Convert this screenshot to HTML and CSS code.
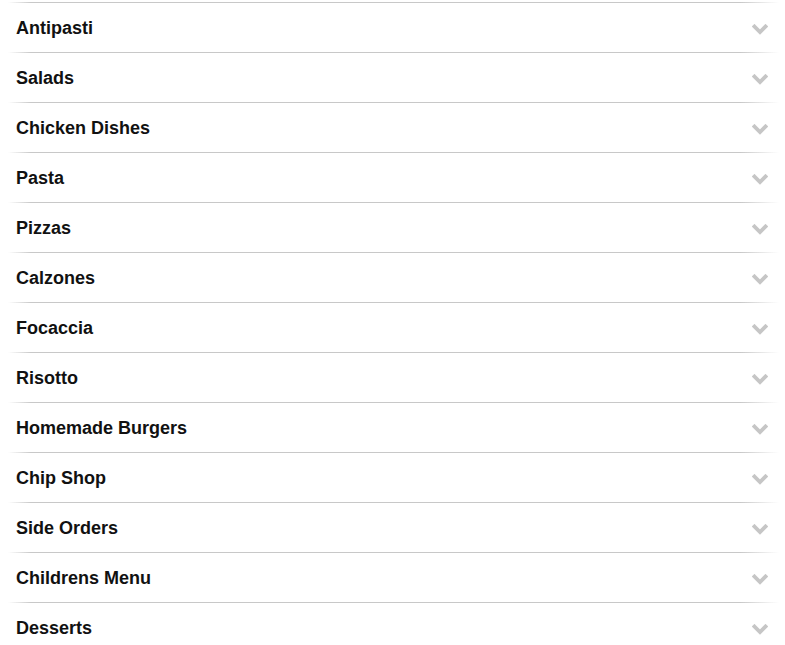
FILE: index.html
```html
<!DOCTYPE html>
<html lang="en">

<head>
  <meta charset="UTF-8" />
  <meta name="viewport" content="width=device-width, initial-scale=1.0" />
  <title>Menu</title>
  <link rel="stylesheet" href="styles.css">
</head>

<body>
  <ul class="menu">
    <li class="menu-item"><span>Antipasti</span><svg class="chev" viewBox="0 0 16 11"><path d="M2.5 2.5 L8 8 L13.5 2.5" /></svg></li>
    <li class="menu-item"><span>Salads</span><svg class="chev" viewBox="0 0 16 11"><path d="M2.5 2.5 L8 8 L13.5 2.5" /></svg></li>
    <li class="menu-item"><span>Chicken Dishes</span><svg class="chev" viewBox="0 0 16 11"><path d="M2.5 2.5 L8 8 L13.5 2.5" /></svg></li>
    <li class="menu-item"><span>Pasta</span><svg class="chev" viewBox="0 0 16 11"><path d="M2.5 2.5 L8 8 L13.5 2.5" /></svg></li>
    <li class="menu-item"><span>Pizzas</span><svg class="chev" viewBox="0 0 16 11"><path d="M2.5 2.5 L8 8 L13.5 2.5" /></svg></li>
    <li class="menu-item"><span>Calzones</span><svg class="chev" viewBox="0 0 16 11"><path d="M2.5 2.5 L8 8 L13.5 2.5" /></svg></li>
    <li class="menu-item"><span>Focaccia</span><svg class="chev" viewBox="0 0 16 11"><path d="M2.5 2.5 L8 8 L13.5 2.5" /></svg></li>
    <li class="menu-item"><span>Risotto</span><svg class="chev" viewBox="0 0 16 11"><path d="M2.5 2.5 L8 8 L13.5 2.5" /></svg></li>
    <li class="menu-item"><span>Homemade Burgers</span><svg class="chev" viewBox="0 0 16 11"><path d="M2.5 2.5 L8 8 L13.5 2.5" /></svg></li>
    <li class="menu-item"><span>Chip Shop</span><svg class="chev" viewBox="0 0 16 11"><path d="M2.5 2.5 L8 8 L13.5 2.5" /></svg></li>
    <li class="menu-item"><span>Side Orders</span><svg class="chev" viewBox="0 0 16 11"><path d="M2.5 2.5 L8 8 L13.5 2.5" /></svg></li>
    <li class="menu-item"><span>Childrens Menu</span><svg class="chev" viewBox="0 0 16 11"><path d="M2.5 2.5 L8 8 L13.5 2.5" /></svg></li>
    <li class="menu-item"><span>Desserts</span><svg class="chev" viewBox="0 0 16 11"><path d="M2.5 2.5 L8 8 L13.5 2.5" /></svg></li>
  </ul>
</body>

</html>
```

FILE: styles.css
```css
body {
  margin: 0;
  background-color: white;
  color: #111;
  font-family: "Liberation Sans", Arial, sans-serif;
}

.menu {
  list-style: none;
  margin: 0;
  padding: 2px 6px 0 8px;
}

.menu-item {
  position: relative;
  display: flex;
  align-items: center;
  justify-content: space-between;
  height: 50px;
  padding: 0 11px 0 8px;
  box-sizing: border-box;
  font-size: 18px;
  font-weight: bold;
}

.menu-item::before {
  content: "";
  position: absolute;
  left: 0;
  right: 0;
  top: 0;
  height: 1px;
  background: linear-gradient(to right, rgba(200, 200, 200, 0), #c8c8c8 3%, #c8c8c8 95%, rgba(200, 200, 200, 0));
}

.menu-item span {
  margin-top: 2px;
}

.chev {
  width: 16px;
  height: 11px;
  margin-top: 5px;
}

.chev path {
  fill: none;
  stroke: #c6c6c6;
  stroke-width: 3.8;
  stroke-linecap: square;
}
```
